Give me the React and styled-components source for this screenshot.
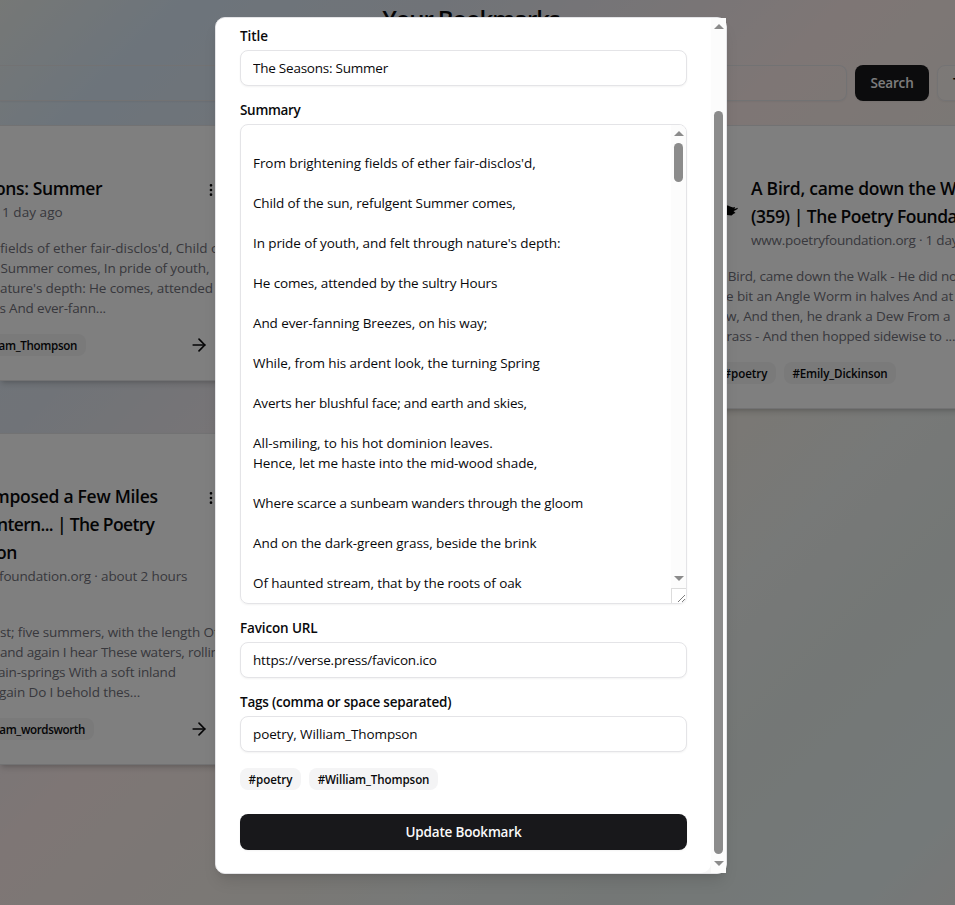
import React from "react";
import styled, { createGlobalStyle } from "styled-components";
import { ArrowRight, EllipsisVertical } from "lucide-react";

const GlobalStyle = createGlobalStyle`
  *, *::before, *::after { box-sizing: border-box; }
  body {
    margin: 0;
    overflow: hidden;
    color: #09090b;
    font-family: "Open Sans", "Noto Sans", sans-serif;
    font-size: 13.5px;
    line-height: 20px;
  }
`;

const Page = styled.div`
  position: relative;
  width: 955px;
  height: 905px;
  overflow: hidden;
  background: linear-gradient(135deg, #ecf0ed 0%, #dae9f7 10%, #e1e7f0 24%, #fdedeb 46%, #f4f1ea 63%, #eff2f0 71%, #e8efec 81%, #e8f3f3 94%, #efefee 100%);
`;

const PageTitle = styled.h1`
  margin: 0;
  padding-top: 3px;
  width: 942px;
  height: 65px;
  text-align: center;
  font-size: 24px;
  font-weight: 600;
  line-height: 32px;
  letter-spacing: -1.1px;
`;

const SearchRow = styled.div`
  display: flex;
  gap: 8px;
  height: 36px;
  margin-bottom: 24px;
  width: 1040px;
`;

const SearchField = styled.div`
  width: 847px;
  border: 1px solid #e4e4e7;
  border-left: 0;
  border-radius: 0 8px 8px 0;
  box-shadow: 0 1px 2px rgba(0, 0, 0, 0.05);
`;

const Button = styled.button`
  display: flex;
  align-items: center;
  justify-content: center;
  height: 36px;
  width: ${(p) => p.$width || "100%"};
  margin-top: ${(p) => p.$top || 0}px;
  padding: 0;
  border: 0;
  border-radius: 8px;
  background: #18181b;
  color: #fafafa;
  font: 600 13.5px/20px "Open Sans", sans-serif;
  letter-spacing: -0.18px;
  box-shadow: 0 1px 2px rgba(0, 0, 0, 0.05);
`;

const OutlineButton = styled(Button)`
  justify-content: flex-start;
  padding-left: 15px;
  border: 1px solid #e8e6e8;
  background: rgba(255, 255, 255, 0.2);
  color: #09090b;
`;

const CardColumns = styled.div`
  display: flex;
  justify-content: space-between;
  width: 1086px;
`;

const Column = styled.div`
  display: flex;
  flex-direction: column;
  gap: 52px;
  width: ${(p) => p.$width}px;
`;

const Card = styled.article`
  padding: 48px 33px 24px ${(p) => (p.$bleed ? 0 : 24)}px;
  border: 1px solid #e4e4e7;
  border-left-width: ${(p) => (p.$bleed ? 0 : 1)}px;
  border-radius: ${(p) => (p.$bleed ? "0 12px 12px 0" : "12px")};
  background: #fff;
  box-shadow: 0 4px 6px -1px rgba(0, 0, 0, 0.14), 0 2px 4px -2px rgba(0, 0, 0, 0.14);
`;

const CardHead = styled.header`
  display: flex;
  align-items: flex-start;
  justify-content: space-between;
  margin-bottom: 16px;
`;

const HeadGroup = styled.div`
  display: flex;
  align-items: center;
  gap: 12px;
`;

const Menu = styled(EllipsisVertical)`
  margin: 8px -1px 0 0;
  width: 16px;
  height: 16px;
  flex: none;
`;

const Line = styled.div`
  height: ${(p) => p.$h || 20}px;
  line-height: ${(p) => p.$h || 20}px;
  margin-left: ${(p) => p.$x || 0}px;
  letter-spacing: ${(p) => (p.$ls || 0) + 0.225}px;
  white-space: pre;
`;

const TitleLine = styled(Line)`
  font-size: 17.5px;
  font-weight: 600;
`;

const MutedLine = styled(Line)`
  color: #71717a;
`;

const CardFoot = styled.footer`
  display: flex;
  align-items: center;
  justify-content: space-between;
  height: 22px;
  margin-top: 16px;
`;

const Arrow = styled(ArrowRight)`
  width: 20px;
  height: 20px;
  margin-right: 9px;
`;

const Tags = styled.div`
  display: flex;
  gap: 8px;
`;

const Tag = styled.span`
  display: flex;
  align-items: center;
  justify-content: ${(p) => (p.$bleed ? "flex-end" : "center")};
  width: ${(p) => p.$w}px;
  height: 22px;
  padding: 2px ${(p) => (p.$bleed ? 9 : 0)}px 0 0;
  border-radius: ${(p) => (p.$bleed ? "0 8px 8px 0" : "8px")};
  background: #f4f4f5;
  font-size: 11.6px;
  font-weight: 600;
  line-height: 16px;
  letter-spacing: ${(p) => (p.$ls || -0.32) + 0.22}px;
  white-space: nowrap;
`;

const Overlay = styled.div`
  position: absolute;
  inset: 0;
  background: rgba(0, 0, 0, 0.5);
`;

const Dialog = styled.section`
  position: absolute;
  left: 215px;
  top: 17px;
  display: flex;
  width: 512px;
  height: 857px;
  border: 1px solid #e4e4e7;
  border-radius: 10px;
  background: #f6f6f6;
  box-shadow: 0 10px 15px -3px rgba(0, 0, 0, 0.1), 0 4px 6px -4px rgba(0, 0, 0, 0.1);
`;

const Form = styled.form`
  display: flex;
  flex-direction: column;
  flex: 1;
  padding: 10px 24px 0;
  border-radius: 9px 0 10px 9px;
  background: #fff;
`;

const Field = styled.div`
  display: flex;
  flex-direction: column;
  gap: 8px;
  margin-bottom: 16px;
`;

const Label = styled.label`
  height: 14px;
  font-weight: 600;
  line-height: 16px;
  letter-spacing: ${(p) => p.$ls + 0.26}px;
  white-space: nowrap;
`;

const TextInput = styled.input`
  height: 36px;
  padding: 0 12px 1px;
  border: 1px solid #e4e4e7;
  border-radius: 8px;
  background: #fff;
  color: #09090b;
  font: 400 13.5px/20px "Open Sans", sans-serif;
  letter-spacing: ${(p) => p.$ls + 0.225}px;
  box-shadow: 0 1px 2px rgba(0, 0, 0, 0.05);
  outline: 0;
`;

const SummaryBox = styled.div`
  display: flex;
  height: 480px;
  border: 1px solid #e4e4e7;
  border-radius: 8px;
  overflow: hidden;
  box-shadow: 0 1px 2px rgba(0, 0, 0, 0.05);
`;

const SummaryText = styled.div`
  flex: 1;
  padding: 8px 12px;
  overflow: hidden;
`;

const Track = styled.div`
  display: flex;
  flex-direction: column;
  align-items: center;
  width: 15px;
  padding-top: 6px;
  background: #fcfcfc;
`;

const ArrowUp = styled.i`
  width: 0;
  height: 0;
  border: 5px solid transparent;
  border-top: 0;
  border-bottom: 5px solid #8b8b8b;
`;

const ArrowDown = styled(ArrowUp)`
  border-top: 5px solid #8b8b8b;
  border-bottom: 0;
`;

const Thumb = styled.div`
  width: 9px;
  height: ${(p) => p.$h}px;
  margin: ${(p) => p.$above}px 0 ${(p) => p.$below}px;
  border-radius: 4.5px;
  background: #8b8b8b;
`;

const Grip = styled.svg`
  width: 15px;
  height: 15px;
  margin-top: 7px;
  border-top: 1px solid #dcdcdc;
  border-left: 1px solid #dcdcdc;
  background: #fff;
  flex: none;
`;

const BirdIcon = styled.svg`
  width: 24px;
  height: 24px;
  align-self: center;
  flex: none;
`;

const SUMMARY = [
  ["", 0],
  ["From brightening fields of ether fair-disclos'd,", -0.29],
  ["", 0],
  ["Child of the sun, refulgent Summer comes,", -0.365],
  ["", 0],
  ["In pride of youth, and felt through nature's depth:", -0.328],
  ["", 0],
  ["He comes, attended by the sultry Hours", -0.361],
  ["", 0],
  ["And ever-fanning Breezes, on his way;", -0.33],
  ["", 0],
  ["While, from his ardent look, the turning Spring", -0.313],
  ["", 0],
  ["Averts her blushful face; and earth and skies,", -0.407],
  ["", 0],
  ["All-smiling, to his hot dominion leaves.", -0.256],
  ["Hence, let me haste into the mid-wood shade,", -0.327],
  ["", 0],
  ["Where scarce a sunbeam wanders through the gloom", -0.37],
  ["", 0],
  ["And on the dark-green grass, beside the brink", -0.307],
  ["", 0],
  ["Of haunted stream, that by the roots of oak", -0.338],
];

const CARDS = {
  seasons: {
    bleed: true,
    title: [["ons: Summer", -0.62, -5]],
    meta: [["1 day ago", -0.17, 2]],
    body: [
      ["fields of ether fair-disclos'd, Child of", -0.25, 0],
      ["Summer comes, In pride of youth,", -0.37, 0.5],
      ["ature's depth: He comes, attended", -0.35, 0],
      ["s And ever-fann...", -0.4, -0.5],
    ],
    tags: [["am_Thompson", 86, -0.55]],
  },
  tintern: {
    bleed: true,
    title: [["mposed a Few Miles", -0.5, -7], ["ntern... | The Poetry", -0.87, -3], ["on", -0.6, -4]],
    meta: [["foundation.org · about 2 hours", -0.38, -1], ["", 0, 0]],
    body: [
      ["st; five summers, with the length Of", -0.365, 0],
      ["and again I hear These waters, rolling", -0.45, 0],
      ["ain-springs With a soft inland", -0.39, -2],
      ["gain Do I behold thes...", -0.34, -1],
    ],
    tags: [["am_wordsworth", 94, -0.6]],
  },
  bird: {
    icon: true,
    title: [["A Bird, came down the Walk", -0.48, 0], ["(359) | The Poetry Foundation", -0.72, 0]],
    meta: [["www.poetryfoundation.org · 1 day ago", -0.45, 0]],
    body: [
      ["A Bird, came down the Walk - He did not", -0.41, 1],
      ["e bit an Angle Worm in halves And at", -0.32, 11],
      ["w, And then, he drank a Dew From a", -0.33, 11],
      ["rass - And then hopped sidewise to ...", -0.38, 11.5],
    ],
    tags: [["#poetry", 61, -0.26], ["#Emily_Dickinson", 112, -0.365]],
  },
};

function Bird() {
  return (
    <BirdIcon viewBox="0 0 24 24">
      <path
        d="M2 8 8 5.500 13 5.500 15 6.500 18 7.500 20 7 19.500 9 22.800 7.700 22.500 9 20 10.500 18.500 11 20.500 13 19 13.500 16.500 15.500 12 15 9 15 4 12Z"
        fill="#000"
      />
    </BirdIcon>
  );
}

function BookmarkCard({ data }) {
  const { bleed, icon, title, meta, body, tags } = data;
  return (
    <Card $bleed={bleed}>
      <CardHead>
        <HeadGroup>
          {icon && <Bird />}
          <div>
            {title.map(([t, ls, x]) => (
              <TitleLine key={t} $h={28} $ls={ls} $x={x}>{t}</TitleLine>
            ))}
            {meta.map(([t, ls, x]) => (
              <MutedLine key={t} $ls={ls} $x={x}>{t}</MutedLine>
            ))}
          </div>
        </HeadGroup>
        {bleed && <Menu />}
      </CardHead>
      {body.map(([t, ls, x]) => (
        <MutedLine key={t} $ls={ls} $x={x}>{t}</MutedLine>
      ))}
      <CardFoot>
        <Tags>
          {tags.map(([t, w, ls]) => (
            <Tag key={t} $w={w} $ls={ls} $bleed={bleed}>{t}</Tag>
          ))}
        </Tags>
        {bleed && <Arrow />}
      </CardFoot>
    </Card>
  );
}

function InputField({ label, labelSpacing, value, spacing }) {
  return (
    <Field>
      <Label $ls={labelSpacing}>{label}</Label>
      <TextInput $ls={spacing} defaultValue={value} />
    </Field>
  );
}

export default function App() {
  return (
    <Page>
      <GlobalStyle />
      <PageTitle>Your Bookmarks</PageTitle>
      <SearchRow>
        <SearchField />
        <Button $width="74px">Search</Button>
        <OutlineButton $width="100px">Tags</OutlineButton>
      </SearchRow>
      <CardColumns>
        <Column $width={252}>
          <BookmarkCard data={CARDS.seasons} />
          <BookmarkCard data={CARDS.tintern} />
        </Column>
        <Column $width={396}>
          <BookmarkCard data={CARDS.bird} />
        </Column>
      </CardColumns>

      <Overlay />
      <Dialog>
        <Form>
          <InputField label="Title" labelSpacing={-0.3} value="The Seasons: Summer" spacing={-0.46} />
          <Field>
            <Label $ls={-0.56}>Summary</Label>
            <SummaryBox>
              <SummaryText>
                {SUMMARY.map(([t, ls], i) => (
                  <Line key={i} $ls={ls}>{t}</Line>
                ))}
              </SummaryText>
              <Track>
                <ArrowUp />
                <Thumb $h={39} $above={7} $below={394} />
                <ArrowDown />
                <Grip viewBox="0 0 14 14">
                  <path d="M6 13 13 6M10 13 13 10" stroke="#444" strokeDasharray="1 0.4" />
                </Grip>
              </Track>
            </SummaryBox>
          </Field>
          <InputField label="Favicon URL" labelSpacing={-0.4} value="https://verse.press/favicon.ico" spacing={-0.4} />
          <InputField label="Tags (comma or space separated)" labelSpacing={-0.47} value="poetry, William_Thompson" spacing={-0.35} />
          <Tags>
            <Tag $w={61} $ls={-0.26}>#poetry</Tag>
            <Tag $w={129}>#William_Thompson</Tag>
          </Tags>
          <Button type="button" $top={24}>Update Bookmark</Button>
        </Form>
        <Track>
          <ArrowUp />
          <Thumb $h={743} $above={82} $below={7} />
          <ArrowDown />
        </Track>
      </Dialog>
    </Page>
  );
}
